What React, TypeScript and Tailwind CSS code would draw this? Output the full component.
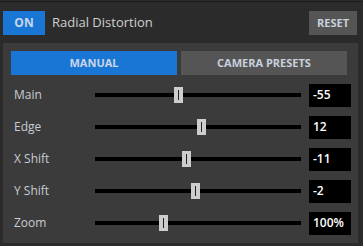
import React from "react";

const rows = [
  { label: "Main", value: "-55", pos: 79 },
  { label: "Edge", value: "12", pos: 102 },
  { label: "X Shift", value: "-11", pos: 87 },
  { label: "Y Shift", value: "-2", pos: 96 },
  { label: "Zoom", value: "100%", pos: 64 },
];

export default function App() {
  return (
    <div
      className="w-[363px] h-[246px] bg-[#2b2b2b] overflow-hidden"
      style={{ fontFamily: '"Open Sans", "Noto Sans", sans-serif' }}
    >
      <div className="h-[1px] mt-[1px] bg-[#1c1c1c]" />
      <div className="flex items-center h-[24px] mt-[9px] pl-[3px] pr-[6px]">
        <div className="w-[42px] h-[24px] bg-[#1a76d5] flex items-center justify-center text-[12px] font-bold text-[#c9d6e8]">
          ON
        </div>
        <div className="ml-[7px] text-[13px] text-[#cfcfcf]">Radial Distortion</div>
        <div className="ml-auto w-[48px] h-[24px] bg-[#555555] flex items-center justify-center text-[11px] font-bold text-[#c8d0dc]">
          RESET
        </div>
      </div>
      <div className="ml-[3px] mt-[8px] w-[355px] h-[200px] bg-[#3b3b3b] pt-[8px] pl-[8px]">
        <div className="flex gap-[4px]">
          <div className="w-[166px] h-[24px] bg-[#1a76d5] flex items-center justify-center text-[11px] font-bold text-[#c9d6e8]">
            MANUAL
          </div>
          <div className="w-[166px] h-[24px] bg-[#555555] flex items-center justify-center text-[11px] font-bold text-[#c8d0dc]">
            CAMERA PRESETS
          </div>
        </div>
        <div className="mt-[4px] flex flex-col">
          {rows.map((r) => (
            <div key={r.label} className="flex items-center h-[32px]">
              <div className="w-[84px] pl-[3px] text-[12px] text-[#c8ccd2]">{r.label}</div>
              <div className="relative w-[206px] h-[4px] bg-black">
                <div
                  className="absolute top-[-6px] w-[9px] h-[16px] bg-[#cdcdcd] flex items-center justify-center"
                  style={{ left: r.pos }}
                >
                  <div className="w-[1px] h-[10px] bg-[#222]" />
                </div>
              </div>
              <div className="ml-[8px] w-[42px] h-[23px] bg-black flex items-center pl-[4px] text-[12px] font-semibold text-white">
                {r.value}
              </div>
            </div>
          ))}
        </div>
      </div>
    </div>
  );
}
